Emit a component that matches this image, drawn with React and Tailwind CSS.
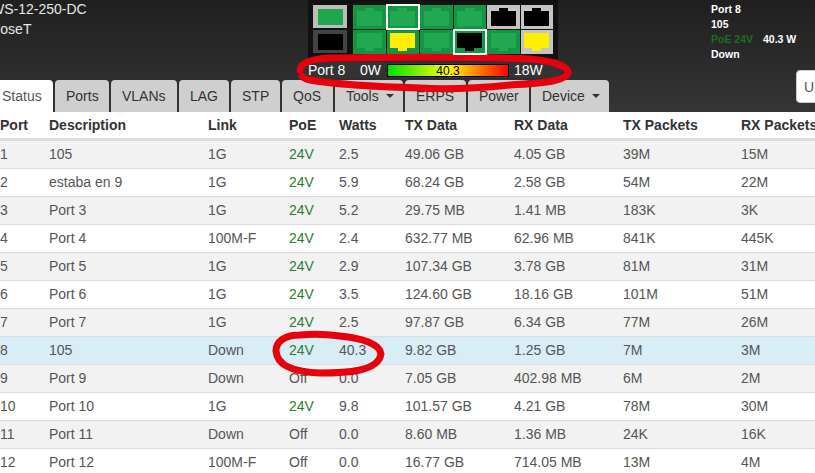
const rows = [
  ["1","105","1G","24V","2.5","49.06 GB","4.05 GB","39M","15M"],
  ["2","estaba en 9","1G","24V","5.9","68.24 GB","2.58 GB","54M","22M"],
  ["3","Port 3","1G","24V","5.2","29.75 MB","1.41 MB","183K","3K"],
  ["4","Port 4","100M-F","24V","2.4","632.77 MB","62.96 MB","841K","445K"],
  ["5","Port 5","1G","24V","2.9","107.34 GB","3.78 GB","81M","31M"],
  ["6","Port 6","1G","24V","3.5","124.60 GB","18.16 GB","101M","51M"],
  ["7","Port 7","1G","24V","2.5","97.87 GB","6.34 GB","77M","26M"],
  ["8","105","Down","24V","40.3","9.82 GB","1.25 GB","7M","3M"],
  ["9","Port 9","Down","Off","0.0","7.05 GB","402.98 MB","6M","2M"],
  ["10","Port 10","1G","24V","9.8","101.57 GB","4.21 GB","78M","30M"],
  ["11","Port 11","Down","Off","0.0","8.60 MB","1.36 MB","24K","16K"],
  ["12","Port 12","100M-F","Off","0.0","16.77 GB","714.05 MB","13M","4M"],
];
const cols = ["w-[49px]","w-[159px]","w-[81px]","w-[50px]","w-[66px]","w-[109px]","w-[109px]","w-[118px]","w-[90px]"];
const heads = ["Port","Description","Link","PoE","Watts","TX Data","RX Data","TX Packets","RX Packets"];
const tabs = [
  ["Status","w-[62px] -ml-[9px]",false],
  ["Ports","w-[54px]",false],
  ["VLANs","w-[66px]",false],
  ["LAG","w-[50px]",false],
  ["STP","w-[49px]",false],
  ["QoS","w-[51px]",false],
  ["Tools","w-[68px]",true],
  ["ERPS","w-[61px]",false],
  ["Power","w-[61px]",false],
  ["Device","w-[78px]",true],
];

function Port({ fill = "#22a850", bg = "#129545", sel, up }) {
  return (
    <div className={`relative h-[24px] flex items-center justify-center ${sel ? "outline-2 -outline-offset-1 outline-white z-10" : ""}`} style={{ background: bg }}>
      <svg width="25" height="18" viewBox="0 0 25 18">
        <path d="M0 0H25V15H17V18H8V15H0Z" fill={fill} transform={up ? "matrix(1 0 0 -1 0 18)" : undefined} />
      </svg>
    </div>
  );
}

export default function App() {
  return (
    <div className="relative w-[815px] h-[473px] overflow-hidden bg-white font-['Liberation_Sans',Arial,sans-serif] text-[14px] text-[#333]">
      <header className="h-[112px] bg-[linear-gradient(#1f1f1f,#353535)] flex relative">
        <div className="w-[308px] -mt-[1px] text-[#e6e6e6] text-[14px] leading-[20px] whitespace-nowrap">
          <div className="-ml-[9px]">WS-12-250-DC</div>
          <div className="-ml-[9px]">PoseT</div>
        </div>
        <div className="w-[250px] h-[59px] bg-[#111] pt-[5px] pl-[5px] flex gap-[6px]">
          <div className="flex flex-col gap-[2px]">
            <div className="w-[34px] h-[23px] bg-[#bdbdbd] flex items-center justify-center"><div className="w-[25px] h-[16px] bg-[#20a64f]" /></div>
            <div className="w-[34px] h-[23px] bg-[#444] flex items-center justify-center"><div className="w-[25px] h-[16px] bg-black" /></div>
          </div>
          <div className="w-[200px] h-[49px] grid grid-cols-6 gap-px bg-[#111]">
            <Port up /><Port up sel /><Port up /><Port up /><Port up fill="#000" bg="#c4c4c4" /><Port up fill="#000" bg="#c4c4c4" />
            <Port /><Port fill="#ffee00" /><Port /><Port fill="#000" sel /><Port /><Port fill="#ffee00" bg="#c4c4c4" />
          </div>
        </div>
        <div className="ml-[153px] pt-[2px] text-white font-bold text-[10.5px] leading-[15px]">
          <div>Port 8</div>
          <div>105</div>
          <div className="flex"><span className="text-[#1c6e20] w-[52px]">PoE 24V</span><span>40.3 W</span></div>
          <div>Down</div>
        </div>
        <div className="absolute left-[796px] top-[70px] w-[40px] h-[33px] bg-white border border-[#ccc] rounded-[4px] pl-[7px] pt-[6px] text-[#555]">U</div>
      </header>

      <div className="absolute left-[304px] top-[62px] h-[16px] flex items-center text-white text-[14px] bg-[#333] w-[258px]">
        <span className="ml-[4px] w-[52px]">Port 8</span>
        <span className="w-[27px]">0W</span>
        <div className="w-[122px] h-[13px] border border-black bg-[linear-gradient(to_right,#00e000,#ffff00_50%,#ff0000)] text-black text-[12px] leading-[12px] text-center">40.3</div>
        <span className="ml-[5px]">18W</span>
      </div>

      <nav className="absolute left-0 top-[80px] flex gap-[2px] h-[32px]">
        {tabs.map(([t, w, caret], i) => (
          <div key={t} className={`${w} h-[32px] pl-[11px] flex items-center gap-[7px] rounded-t-[4px] whitespace-nowrap ${i === 0 ? "bg-white text-[#555]" : "bg-[#cfcfcf] text-[#333]"}`}>
            <span>{t}</span>
            {caret && <span className="w-0 h-0 border-x-[4px] border-x-transparent border-t-[4px] border-t-[#333]" />}
          </div>
        ))}
      </nav>

      <div className="w-[830px]">
        <div className="flex h-[29px] pt-[1px] items-center font-bold border-b-[3px] border-[#ddd] text-[#333]">
          {heads.map((h, i) => <div key={h} className={`${cols[i]} shrink-0 whitespace-nowrap`}>{h}</div>)}
        </div>
        {rows.map((r, ri) => (
          <div key={r[0]} className={`flex h-[28px] items-center border-b border-[#ddd] text-[#555] ${ri === 7 ? "bg-[#d9edf7]" : ri % 2 === 0 ? "bg-[#f2f2f2]" : "bg-white"}`}>
            {r.map((c, i) => (
              <div key={i} className={`${cols[i]} shrink-0 whitespace-nowrap ${i === 3 && c === "24V" ? "text-[#2e7d32]" : ""}`}>{c}</div>
            ))}
          </div>
        ))}
      </div>

      <svg className="absolute inset-0 pointer-events-none" width="815" height="473" fill="none" stroke="#e8000d" strokeLinecap="round" strokeLinejoin="round">
        <path strokeWidth="7" d="M300 70 C301 63 310 59 330 58 C400 57 480 57 530 59 C555 61 569 67 568 73 C566 81 545 83 510 85 C480 88 450 90 420 88 C385 87 340 85 310 80 C305 79 303 78 302 76" />
        <path strokeWidth="7" d="M300 335 C284 335 276 342 276 351 C277 364 290 372 320 373 C345 373 378 372 381 354 C380 344 362 338 340 336 C325 334 312 334 300 335Z" />
      </svg>
    </div>
  );
}
